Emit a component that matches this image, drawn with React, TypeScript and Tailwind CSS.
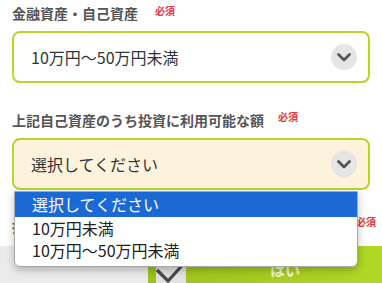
// Investment form — select with open dropdown
const FONT = "font-['Noto_Sans_CJK_JP','Noto_Sans',sans-serif]";

function Required({ className = "" }: { className?: string }) {
  return (
    <span className={`text-[10px] font-bold leading-[12px] text-[#e8333c] self-start ${className}`}>必須</span>
  );
}

function Chevron() {
  return (
    <div className="flex h-[26px] w-[26px] items-center justify-center rounded-full bg-[#e5e5e5]">
      <svg width="14" height="9" viewBox="0 0 14 9" fill="none">
        <path d="M1.5 1.5 L7 7 L12.5 1.5" stroke="#555" strokeWidth="2.8" strokeLinecap="round" strokeLinejoin="round" />
      </svg>
    </div>
  );
}

function SelectBox({ value, bg }: { value: string; bg: string }) {
  return (
    <div className={`flex h-[52px] items-center justify-between rounded-[8px] border-2 border-[#b3d82a] pl-[17px] pr-[11px] ${bg}`}>
      <span className="text-[16px] leading-[20px] text-[#333]">{value}</span>
      <Chevron />
    </div>
  );
}

export default function App() {
  return (
    <div className={`relative h-[283px] w-[382px] overflow-hidden bg-white ${FONT}`}>
      <div className="px-[12px] pt-[3px]">
        <div className="flex items-start">
          <span className="text-[14px] font-bold leading-[20px] text-[#555]">金融資産・自己資産</span>
          <Required className="ml-[17px] mt-[2px]" />
        </div>
        <div className="mt-[8px]">
          <SelectBox value="10万円〜50万円未満" bg="bg-white" />
        </div>

        <div className="mt-[27px] flex items-start">
          <span className="text-[14px] font-bold leading-[20px] text-[#555]">上記自己資産のうち投資に利用可能な額</span>
          <Required className="ml-[14px] mt-[1px]" />
        </div>
        <div className="mt-[8px]">
          <SelectBox value="選択してください" bg="bg-[#fdf2dc]" />
        </div>

        <div className="mt-[26px] flex items-center justify-between">
          <span className="text-[14px] font-bold leading-[20px] text-[#555]">投資経験</span>
          <Required className="mr-[-6px]" />
        </div>
      </div>

      <div className="mt-[10px] flex h-[40px]">
        <div className="w-[148px] bg-[#ebebeb]" />
        <div className="flex flex-1 items-start bg-gradient-to-r from-[#9cc21c] to-[#b2d826] pl-[8px]">
          <div className="relative h-[40px] w-[30px] bg-[#e2e2e2]">
            <svg className="absolute left-[-2px] top-[8px]" width="34" height="30" viewBox="0 0 34 30" fill="none">
              <path d="M3 16 L14 27 L33 6" stroke="#4a4a4a" strokeWidth="3.2" />
            </svg>
          </div>
          <span className="ml-[84px] mt-[14px] text-[15px] font-bold leading-[20px] text-[#eef6d4]">はい</span>
        </div>
      </div>

      <div className="absolute left-[14px] top-[191px] w-[344px] overflow-hidden rounded-b-[6px] border border-[#a8a8a8] bg-white pb-[5px] shadow-[0_3px_8px_rgba(0,0,0,0.25)]">
        <div className="flex h-[25px] items-center bg-[#1a69d4] pb-[2px] pl-[17px] text-[16px] text-white">選択してください</div>
        <div className="flex h-[22px] items-center pl-[17px] text-[16px] text-[#222]">10万円未満</div>
        <div className="flex h-[22px] items-center pl-[17px] text-[16px] text-[#222]">10万円〜50万円未満</div>
      </div>
    </div>
  );
}
